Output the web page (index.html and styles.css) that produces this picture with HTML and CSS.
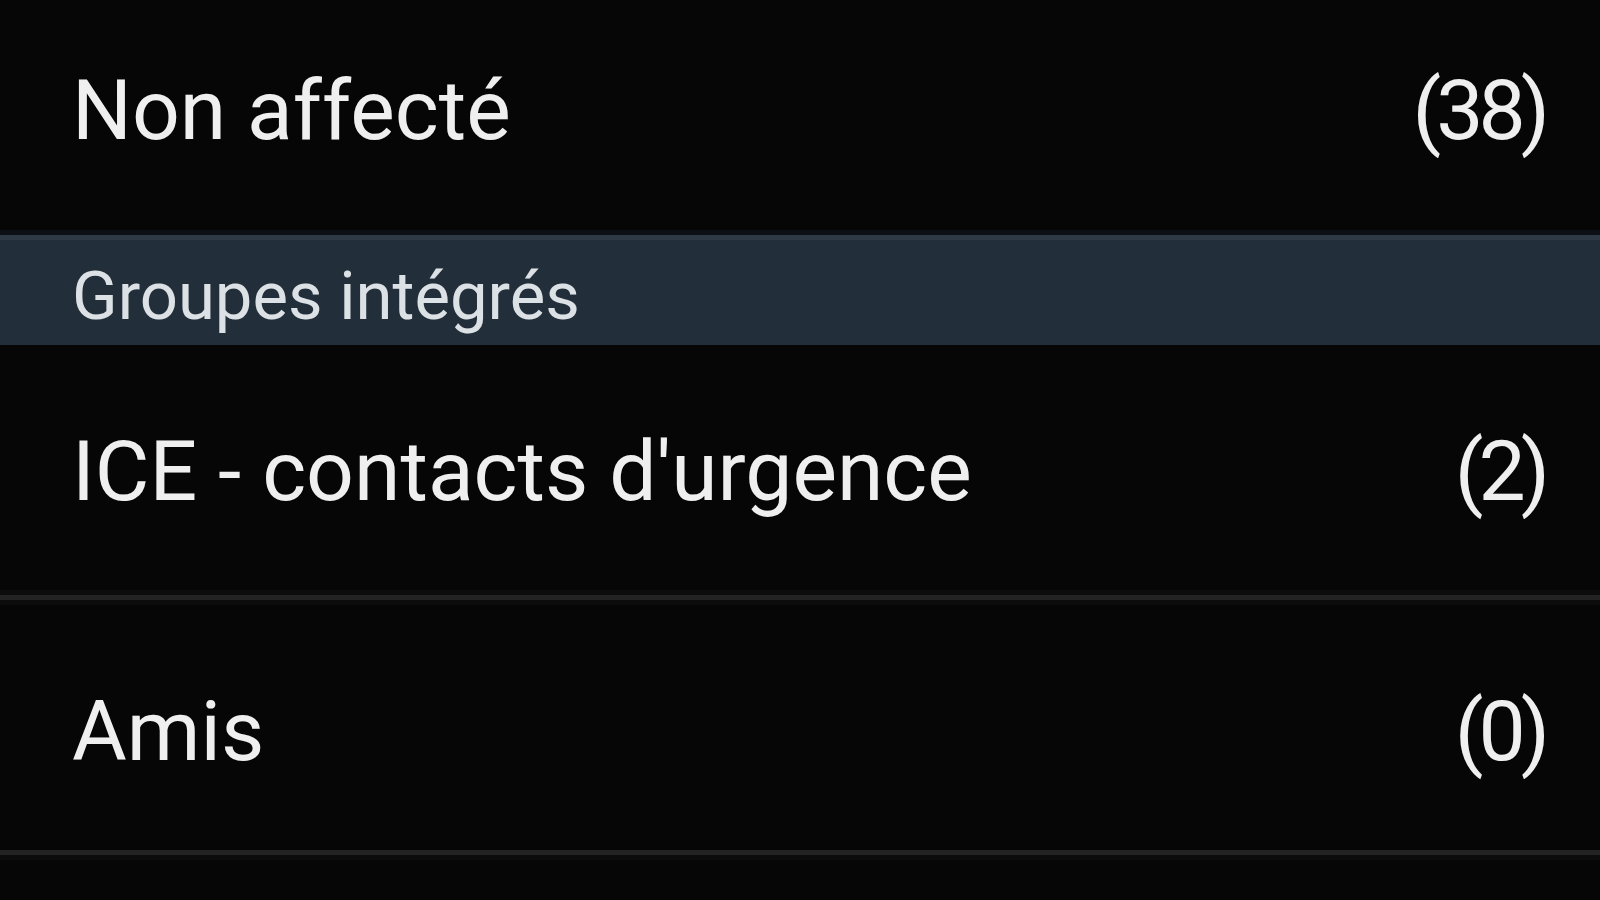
FILE: index.html
```html
<!DOCTYPE html>
<html lang="fr">
<head>
<meta charset="utf-8">
<title>Groupes</title>
<link rel="stylesheet" href="styles.css">
</head>
<body>
<div class="list">
  <div class="row first">
    <span class="name">Non affecté</span>
    <span class="count">(38)</span>
  </div>
  <div class="header">
    <span class="header-text">Groupes intégrés</span>
  </div>
  <div class="row">
    <span class="name">ICE - contacts d'urgence</span>
    <span class="count">(2)</span>
  </div>
  <div class="sep"></div>
  <div class="row">
    <span class="name">Amis</span>
    <span class="count">(0)</span>
  </div>
  <div class="sep last"></div>
</div>
</body>
</html>
```

FILE: styles.css
```css
html, body {
  margin: 0;
  padding: 0;
  background: #060606;
  height: 100%;
  overflow: hidden;
}

body {
  font-family: Roboto, "Noto Sans", "Liberation Sans", sans-serif;
  color: #efefef;
}

.list {
  display: flex;
  flex-direction: column;
}

.row {
  height: 245px;
  box-sizing: border-box;
  padding: 9px 52px 0 72px;
  display: flex;
  align-items: center;
  justify-content: space-between;
  font-size: 84px;
  line-height: 1;
}

.count {
  letter-spacing: -5px;
  padding-right: 3px;
}

.row.first {
  height: 230px;
  padding-top: 0;
  padding-bottom: 8px;
}

.header {
  height: 115px;
  box-sizing: border-box;
  border-top: 5px solid #0c1014;
  background: #222e39;
  box-shadow: inset 0 5px 0 #2e3b46;
  padding: 12px 52px 0 72px;
  display: flex;
  align-items: center;
  font-size: 67px;
  line-height: 1;
  color: #dce1e5;
}

.sep {
  height: 5px;
  background: #232323;
  border-top: 5px solid #0c0c0c;
  border-bottom: 5px solid #0c0c0c;
}

.sep.last {
  border-top: 0;
}
```
